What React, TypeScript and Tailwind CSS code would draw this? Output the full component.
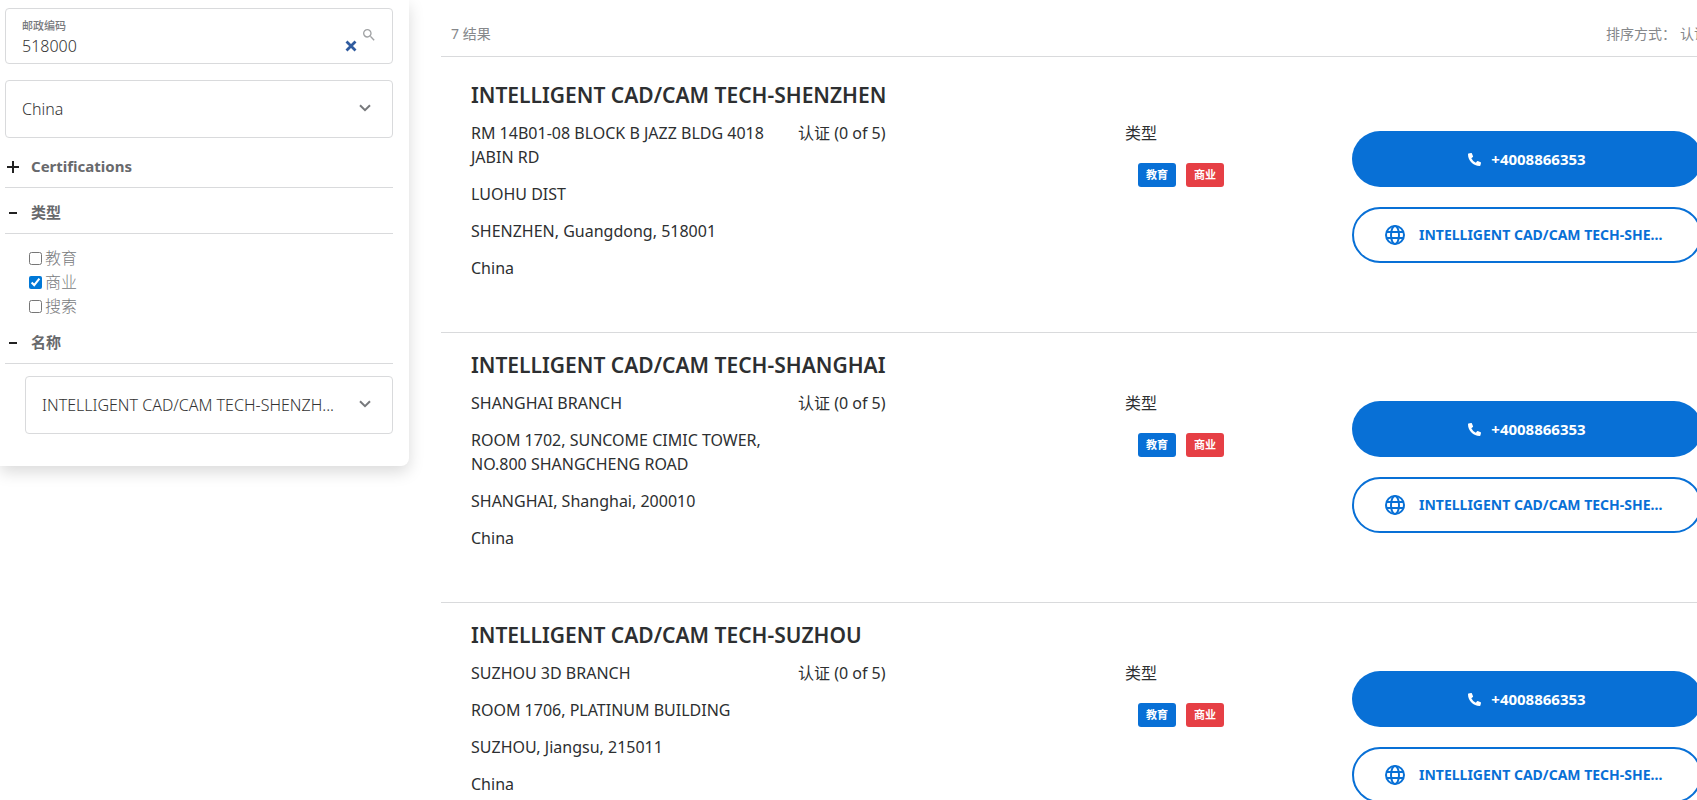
import { FaPhoneAlt } from 'react-icons/fa';
import { MdSearch } from 'react-icons/md';

interface Reseller {
  name: string;
  address: string[];
}

const resellers: Reseller[] = [
  {
    name: 'INTELLIGENT CAD/CAM TECH-SHENZHEN',
    address: ['RM 14B01-08 BLOCK B JAZZ BLDG 4018 JABIN RD', 'LUOHU DIST', 'SHENZHEN, Guangdong, 518001', 'China'],
  },
  {
    name: 'INTELLIGENT CAD/CAM TECH-SHANGHAI',
    address: ['SHANGHAI BRANCH', 'ROOM 1702, SUNCOME CIMIC TOWER, NO.800 SHANGCHENG ROAD', 'SHANGHAI, Shanghai, 200010', 'China'],
  },
  {
    name: 'INTELLIGENT CAD/CAM TECH-SUZHOU',
    address: ['SUZHOU 3D BRANCH', 'ROOM 1706, PLATINUM BUILDING', 'SUZHOU, Jiangsu, 215011', 'China'],
  },
];

const types = [
  { label: '教育', checked: false },
  { label: '商业', checked: true },
  { label: '搜索', checked: false },
];

function GlobeIcon() {
  return (
    <svg viewBox="0 0 20 20" className="size-5 shrink-0" fill="none" stroke="currentColor" strokeWidth="2" aria-hidden="true">
      <circle cx="10" cy="10" r="9" />
      <ellipse cx="10" cy="10" rx="4" ry="9" />
      <path d="M1.8 7h16.4M1.8 13h16.4" />
    </svg>
  );
}

function SelectBox({ label, value }: { label: string; value: string }) {
  return (
    <div className="relative">
      <select
        aria-label={label}
        className="block h-[58px] w-full appearance-none rounded border border-[#d9dadc] bg-white pl-4 pr-12 text-base font-light text-[#333]"
      >
        <option>{value}</option>
      </select>
      <svg
        viewBox="0 0 12 8"
        className="pointer-events-none absolute right-[22px] top-6 h-2 w-3"
        fill="none"
        stroke="#77797c"
        strokeWidth="2"
        aria-hidden="true"
      >
        <path d="M1 1.2l5 5 5-5" />
      </svg>
    </div>
  );
}

function SectionHeader({ title, open }: { title: string; open: boolean }) {
  return (
    <button
      type="button"
      aria-expanded={open}
      className="flex w-full items-center gap-[11px] border-b border-[#d9dadc] px-px pb-[9px] text-left text-[15px] font-bold leading-6 text-[#68696c]"
    >
      <svg viewBox="0 0 14 14" className="size-[14px]" stroke="#222" strokeWidth="2" aria-hidden="true">
        {open ? <path d="M3 8h8" /> : <path d="M1 8h12M7 2v12" />}
      </svg>
      {title}
    </button>
  );
}

function Filters() {
  return (
    <aside className="w-[409px] shrink-0 self-start rounded-br-lg bg-white pb-8 pl-[5px] pr-4 pt-2 shadow-[0_6px_16px_rgba(0,0,0,0.15)]">
      <div className="flex h-14 items-center rounded border border-[#d9dadc] pl-4 pr-[15px]">
        <div className="flex min-w-0 flex-1 flex-col pt-1">
          <label htmlFor="zip" className="text-[11px] font-medium leading-4 text-[#77797c]">
            邮政编码
          </label>
          <input id="zip" type="text" defaultValue="518000" className="w-full text-base font-light leading-6 text-[#333] outline-none" />
        </div>
        <button type="button" aria-label="清除" className="mt-5 p-1 text-[#2f5b9f]">
          <svg viewBox="0 0 12 12" className="size-3" stroke="currentColor" strokeWidth="2.8" aria-hidden="true">
            <path d="M1.5 1.5l9 9M10.5 1.5l-9 9" />
          </svg>
        </button>
        <button type="button" aria-label="搜索" className="mb-[2px] text-[#a0a2a4]">
          <MdSearch className="size-4" />
        </button>
      </div>

      <div className="mt-4">
        <SelectBox label="国家" value="China" />
      </div>

      <div className="mt-4">
        <SectionHeader title="Certifications" open={false} />
      </div>

      <div className="mt-3">
        <SectionHeader title="类型" open />
        <div className="flex flex-col py-3 pl-6 text-base leading-6 text-[#77797c]">
          {types.map((type) => (
            <label key={type.label} className="flex items-center gap-[3px] font-light">
              <input type="checkbox" defaultChecked={type.checked} className="size-[13px] accent-[#0078d7]" />
              {type.label}
            </label>
          ))}
        </div>
      </div>

      <SectionHeader title="名称" open />
      <div className="pl-5 pt-3">
        <SelectBox label="名称" value="INTELLIGENT CAD/CAM TECH-SHENZH..." />
      </div>
    </aside>
  );
}

function ResellerRow({ reseller }: { reseller: Reseller }) {
  return (
    <article className="h-[270px] border-b border-[#d9dadc] px-[30px] pt-4">
      <h2 className="text-[21px] font-semibold leading-8 text-[#2d2f31]">{reseller.name}</h2>
      <div className="grid grid-cols-[327fr_327fr_227fr_350fr] text-base leading-6 text-[#2d2f31]">
        <div className="flex flex-col gap-[13px] pr-7 pt-[10px]">
          {reseller.address.map((line) => (
            <p key={line}>{line}</p>
          ))}
        </div>
        <p className="pt-[10px]">认证 (0 of 5)</p>
        <div className="pt-[10px]">
          <p>类型</p>
          <div className="flex gap-[10px] pl-[13px] pt-[18px] text-[11px] font-bold leading-6 text-white">
            <span className="rounded-[3px] bg-[#0870d6] px-2">教育</span>
            <span className="rounded-[3px] bg-[#e63f45] px-2">商业</span>
          </div>
        </div>
        <div className="flex min-w-0 flex-col gap-5 pt-5">
          <a
            href="tel:+4008866353"
            className="flex h-14 items-center justify-center gap-[10px] rounded-full bg-[#0870d6] text-[15px] font-bold text-white"
          >
            <FaPhoneAlt className="size-[13px]" />
            +4008866353
          </a>
          <a
            href="#website"
            className="flex h-14 items-center gap-[14px] whitespace-nowrap rounded-full border-2 border-[#0870d6] px-[31px] text-sm font-bold text-[#0870d6]"
          >
            <GlobeIcon />
            INTELLIGENT CAD/CAM TECH-SHE...
          </a>
        </div>
      </div>
    </article>
  );
}

export default function App() {
  return (
    <div className="flex h-screen overflow-hidden bg-white font-['Noto_Sans','Noto_Sans_CJK_SC',sans-serif]">
      <Filters />
      {/* The results run a little past the right edge of the window */}
      <main className="-mr-[35px] ml-8 min-w-0 flex-1">
        <div className="flex h-[57px] items-end justify-between border-b border-[#d9dadc] pb-[10px] pl-[10px] pr-6 text-sm leading-6 text-[#86888b]">
          <span>7 结果</span>
          <button type="button" className="flex gap-1">
            <span>排序方式：</span>
            <span>认证</span>
          </button>
        </div>
        <div className="pt-[6px]">
          {resellers.map((reseller) => (
            <ResellerRow key={reseller.name} reseller={reseller} />
          ))}
        </div>
      </main>
    </div>
  );
}
